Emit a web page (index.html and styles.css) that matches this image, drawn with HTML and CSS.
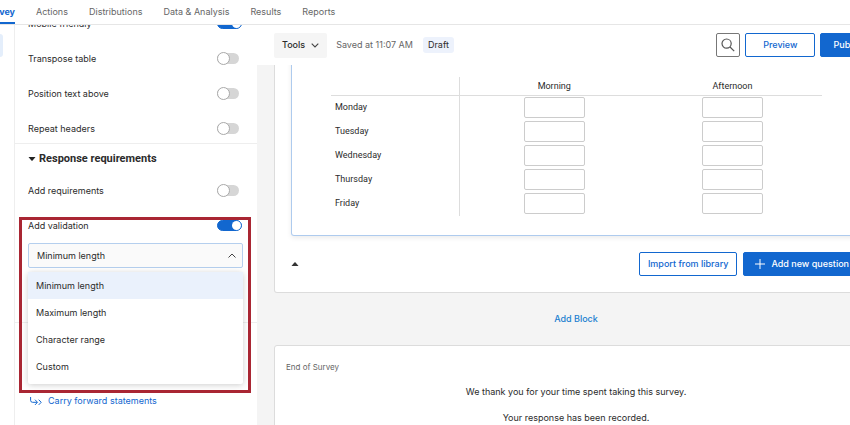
FILE: index.html
```
<!DOCTYPE html>
<html lang="en">
<head>
<meta charset="UTF-8">
<meta name="viewport" content="width=device-width, initial-scale=1.0">
<title>Survey builder</title>
<link rel="stylesheet" href="styles.css">
</head>
<body>

<nav class="tabs">
  <a class="tab tab-active" href="#">Survey</a>
  <a class="tab" href="#">Actions</a>
  <a class="tab" href="#">Distributions</a>
  <a class="tab" href="#">Data &amp; Analysis</a>
  <a class="tab" href="#">Results</a>
  <a class="tab" href="#">Reports</a>
</nav>

<div class="layout">
  <div class="rail">
    <button class="rail-button" aria-label="Survey builder"></button>
  </div>

  <!-- question settings -->
  <aside class="panel">
    <section class="group group-format">
      <div class="row"><label for="mobile">Mobile friendly</label><input class="toggle" type="checkbox" id="mobile" checked></div>
      <div class="row"><label for="transpose">Transpose table</label><input class="toggle" type="checkbox" id="transpose"></div>
      <div class="row"><label for="position">Position text above</label><input class="toggle" type="checkbox" id="position"></div>
      <div class="row"><label for="repeat">Repeat headers</label><input class="toggle" type="checkbox" id="repeat"></div>
    </section>

    <section class="group group-response">
      <h2 class="group-title">
        <svg width="8" height="4" viewBox="0 0 8 4"><path d="M.5 0h7L4.600 3.400q-.6.6-1.200 0z" fill="#222"/></svg>
        Response requirements
      </h2>
      <div class="row"><label for="requirements">Add requirements</label><input class="toggle" type="checkbox" id="requirements"></div>
      <div class="validation">
        <div class="row"><label for="validation">Add validation</label><input class="toggle" type="checkbox" id="validation" checked></div>
        <div class="dropdown">
          <select class="select" aria-label="Validation type">
            <option>Minimum length</option>
            <option>Maximum length</option>
            <option>Character range</option>
            <option>Custom</option>
          </select>
          <svg class="select-arrow" width="8" height="5" viewBox="0 0 8 5"><path d="M.5 4.500l3.500-3.500 3.500 3.500" fill="none" stroke="#444"/></svg>
          <div class="menu">
            <button class="menu-item menu-item-active">Minimum length</button>
            <button class="menu-item">Maximum length</button>
            <button class="menu-item">Character range</button>
            <button class="menu-item">Custom</button>
          </div>
        </div>
        <div class="highlight"></div>
      </div>
    </section>

    <section class="group group-links">
      <a class="carry" href="#">
        <svg width="12" height="9" viewBox="0 0 12 9" fill="none" stroke="#1267cf"><path d="M.6 0v3.3q0 2 2 2H7M5 2.7l2.5 2.6L5 7.9M8.7 2.7l2.5 2.6-2.5 2.6"/></svg>
        Carry forward statements
      </a>
    </section>
  </aside>

  <main class="main">
    <div class="toolbar">
      <button class="tools">Tools
        <svg width="8" height="5" viewBox="0 0 8 5"><path d="M.7.7L4 4 7.3.7" fill="none" stroke="#444" stroke-width="1.1"/></svg>
      </button>
      <span class="saved">Saved at 11:07 AM</span>
      <span class="draft">Draft</span>
      <div class="toolbar-right">
        <button class="search" aria-label="Search">
          <svg width="14" height="14" viewBox="0 0 14 14" fill="none" stroke="#555" stroke-width="1.2"><circle cx="5.6" cy="5.6" r="4.6"/><path d="M9 9l4.2 4.2"/></svg>
        </button>
        <button class="btn btn-preview">Preview</button>
        <button class="btn btn-primary">Publish</button>
      </div>
    </div>

    <div class="canvas">
      <div class="block">
        <div class="question">
          <p class="question-text">How happy are you at each time of the day?</p>
          <table class="matrix">
            <thead>
              <tr><td></td><th scope="col">Morning</th><th scope="col">Afternoon</th></tr>
            </thead>
            <tbody>
              <tr><th scope="row">Monday</th><td><input type="text" aria-label="Monday morning"></td><td><input type="text" aria-label="Monday afternoon"></td></tr>
              <tr><th scope="row">Tuesday</th><td><input type="text" aria-label="Tuesday morning"></td><td><input type="text" aria-label="Tuesday afternoon"></td></tr>
              <tr><th scope="row">Wednesday</th><td><input type="text" aria-label="Wednesday morning"></td><td><input type="text" aria-label="Wednesday afternoon"></td></tr>
              <tr><th scope="row">Thursday</th><td><input type="text" aria-label="Thursday morning"></td><td><input type="text" aria-label="Thursday afternoon"></td></tr>
              <tr><th scope="row">Friday</th><td><input type="text" aria-label="Friday morning"></td><td><input type="text" aria-label="Friday afternoon"></td></tr>
            </tbody>
          </table>
        </div>
        <div class="block-footer">
          <button class="collapse" aria-label="Collapse block">
            <svg width="8" height="4" viewBox="0 0 8 4"><path d="M.5 4h7L4.600.6Q4 0 3.400.6z" fill="#333"/></svg>
          </button>
          <button class="btn btn-import">Import from library</button>
          <button class="btn btn-primary btn-add">
            <svg width="10" height="10" viewBox="0 0 10 10"><path d="M5 0v10M0 5h10" stroke="#fff"/></svg>
            Add new question
          </button>
        </div>
      </div>

      <div class="add-block"><a href="#">Add Block</a></div>

      <div class="block block-end">
        <p class="end-title">End of Survey</p>
        <p class="end-text">We thank you for your time spent taking this survey.</p>
        <p class="end-text">Your response has been recorded.</p>
      </div>
    </div>
  </main>
</div>

</body>
</html>
```
FILE: styles.css
```
* {
  box-sizing: border-box;
}
body {
  display: flex;
  flex-direction: column;
  height: 100vh;
  margin: 0;
  overflow: hidden;
  background-color: #fff;
  color: #2b2b2b;
  font-family: Inter, Roboto, sans-serif;
  font-size: 9px;
  line-height: 20px;
}
button, input, select {
  padding: 0;
  border: 0;
  background: none;
  color: inherit;
  font: inherit;
}
h2, p {
  margin: 0;
}
a {
  color: #1267cf;
  text-decoration: none;
}
svg {
  flex-shrink: 0;
}

/* top navigation */
.tabs {
  display: flex;
  flex-shrink: 0;
  gap: 21px;
  height: 25px;
  border-bottom: 1px solid #e6e6e6;
}
.tab {
  padding-top: 2px;
  color: #666;
  white-space: nowrap;
}
.tab-active {
  display: flex;
  justify-content: flex-end;
  width: 15px;
  border-bottom: 2px solid #1267cf;
  color: #1267cf;
  font-weight: 700;
}

.layout {
  display: flex;
  flex: 1;
  min-height: 0;
}
.rail {
  flex: 0 0 15px;
  padding-top: 9px;
  border-right: 1px solid #eee;
}
.rail-button {
  display: block;
  width: 3px;
  height: 23px;
  border-radius: 0 4px 4px 0;
  background-color: #e4eefb;
}

/* settings panel */
.panel {
  flex: 0 0 242px;
  overflow: hidden;
}
.group {
  display: flex;
  flex-direction: column;
  gap: 15px;
  padding: 5px 14px 4px 13px;
  border-bottom: 1px solid #eee;
}
.group-format {
  margin-top: -16px;
}
.group-response {
  height: 179px;
}
.group-title {
  display: flex;
  align-items: center;
  gap: 3px;
  margin-bottom: -3px;
  font-family: Roboto, sans-serif;
  font-size: 11px;
  font-weight: 700;
}
.row {
  display: flex;
  justify-content: space-between;
}
.toggle {
  appearance: none;
  display: flex;
  align-items: center;
  width: 22px;
  height: 11px;
  margin: 4px 4px 0 0;
  border-radius: 6px;
  background-color: #d6d6d6;
}
.toggle::before {
  content: "";
  width: 11px;
  height: 11px;
  border: 1px solid #aaa;
  border-radius: 50%;
  background-color: #fff;
}
.toggle:checked {
  justify-content: flex-end;
  width: 25px;
  margin-right: 1px;
  border: 1px solid #1267cf;
  background-color: #1267cf;
}
.toggle:checked::before {
  width: 9px;
  height: 9px;
  border: 0;
}
.validation {
  position: relative;
}
.dropdown {
  position: relative;
  display: flex;
  align-items: center;
  margin-top: 7px;
}
.select {
  appearance: none;
  flex: 1;
  height: 25px;
  padding: 0 8px;
  border: 1px solid #b5cfee;
  border-radius: 2px;
  background-color: #fafafa;
}
.select-arrow {
  position: absolute;
  right: 7px;
}
.menu {
  position: absolute;
  top: 29px;
  left: 0;
  right: 0;
  display: flex;
  flex-direction: column;
  padding-bottom: 4px;
  border-radius: 2px;
  background-color: #fff;
  box-shadow: 0 1px 6px rgba(0, 0, 0, 0.2);
}
.menu-item {
  height: 27px;
  padding: 0 8px;
  text-align: left;
}
.menu-item-active {
  background-color: #eaf1fc;
}
.highlight {
  position: absolute;
  top: 1px;
  left: -9px;
  right: -8px;
  height: 176px;
  border: 3px solid #a92633;
  pointer-events: none;
}
.group-links {
  padding-top: 68px;
  border-bottom: 0;
}
.carry {
  display: flex;
  align-items: center;
  gap: 6px;
  padding-left: 2px;
}

/* editor */
.main {
  display: flex;
  flex: 1;
  flex-direction: column;
  min-width: 0;
  overflow: hidden;
}
.toolbar {
  display: flex;
  flex-shrink: 0;
  align-items: center;
  height: 40px;
  margin-right: -28px;
  padding-left: 17px;
}
.tools {
  display: flex;
  align-items: center;
  gap: 6px;
  height: 25px;
  padding: 0 8px;
  border-radius: 2px;
  background-color: #f5f5f5;
  font-weight: 500;
}
.saved {
  margin-left: 9px;
  color: #666;
}
.draft {
  margin-left: 10px;
  padding: 0 5px;
  border-radius: 3px;
  background-color: #edf2fc;
  line-height: 16px;
}
.toolbar-right {
  display: flex;
  gap: 5px;
  margin-left: auto;
}
.search {
  display: flex;
  align-items: center;
  justify-content: center;
  width: 24px;
  height: 24px;
  border: 1px solid #777;
  border-radius: 2px;
}
.btn {
  height: 24px;
  padding: 0 8px;
  border: 1px solid #1267cf;
  border-radius: 2px;
  background-color: #fff;
  color: #1267cf;
  font-weight: 500;
  white-space: nowrap;
}
.btn-preview {
  padding: 0 17px;
}
.btn-primary {
  padding: 0 12px;
  background-color: #1267cf;
  color: #fff;
}
.canvas {
  flex: 1;
  min-height: 0;
  margin-right: -28px;
  padding-left: 17px;
  overflow: hidden;
  background-color: #f4f4f4;
}
.block {
  padding: 0 16px;
  border: 1px solid #dcdcdc;
  border-top: 0;
  border-radius: 0 0 3px 3px;
  background-color: #fff;
}
.question {
  padding: 0 38px 19px 39px;
  border: 1px solid #aecbee;
  border-top: 0;
  border-radius: 0 0 3px 3px;
  box-shadow: 0 2px 5px rgba(0, 0, 0, 0.08);
}
.question-text {
  margin-top: -16px;
  padding-bottom: 8px;
}
.matrix {
  width: 100%;
  border-collapse: collapse;
  table-layout: fixed;
  font-family: Roboto, sans-serif;
}
.matrix th, .matrix td {
  height: 24px;
  padding: 0;
  text-align: center;
  font-weight: 400;
}
.matrix tbody th {
  padding-bottom: 2px;
}
.matrix thead th, .matrix thead td {
  height: 18px;
  border-bottom: 1px solid #ddd;
  line-height: 18px;
}
.matrix tr > :first-child {
  width: 128px;
  padding-left: 4px;
  border-right: 1px solid #ddd;
  text-align: left;
}
.matrix tr > :nth-child(2) {
  width: 184px;
  padding-left: 6px;
}
.matrix input {
  display: block;
  width: 61px;
  height: 21px;
  margin: 0 auto;
  border: 1px solid #ccc;
  border-radius: 2px;
}
.block-footer {
  display: flex;
  align-items: center;
  gap: 6px;
  padding: 16px 0;
}
.collapse {
  display: flex;
  margin-right: auto;
}
.btn-add {
  display: flex;
  align-items: center;
  gap: 6px;
  padding: 0 11px;
}
.add-block {
  padding: 16px 0;
  text-align: center;
  font-weight: 500;
}
.add-block a {
  color: #1a7fd0;
}
.block-end {
  height: 100px;
  padding: 11px;
  border-top: 1px solid #dcdcdc;
  border-radius: 3px;
}
.end-title {
  margin-bottom: 4px;
  color: #666;
  font-size: 8px;
}
.end-text {
  margin-bottom: 5px;
  padding-top: 1px;
  text-align: center;
}
```
